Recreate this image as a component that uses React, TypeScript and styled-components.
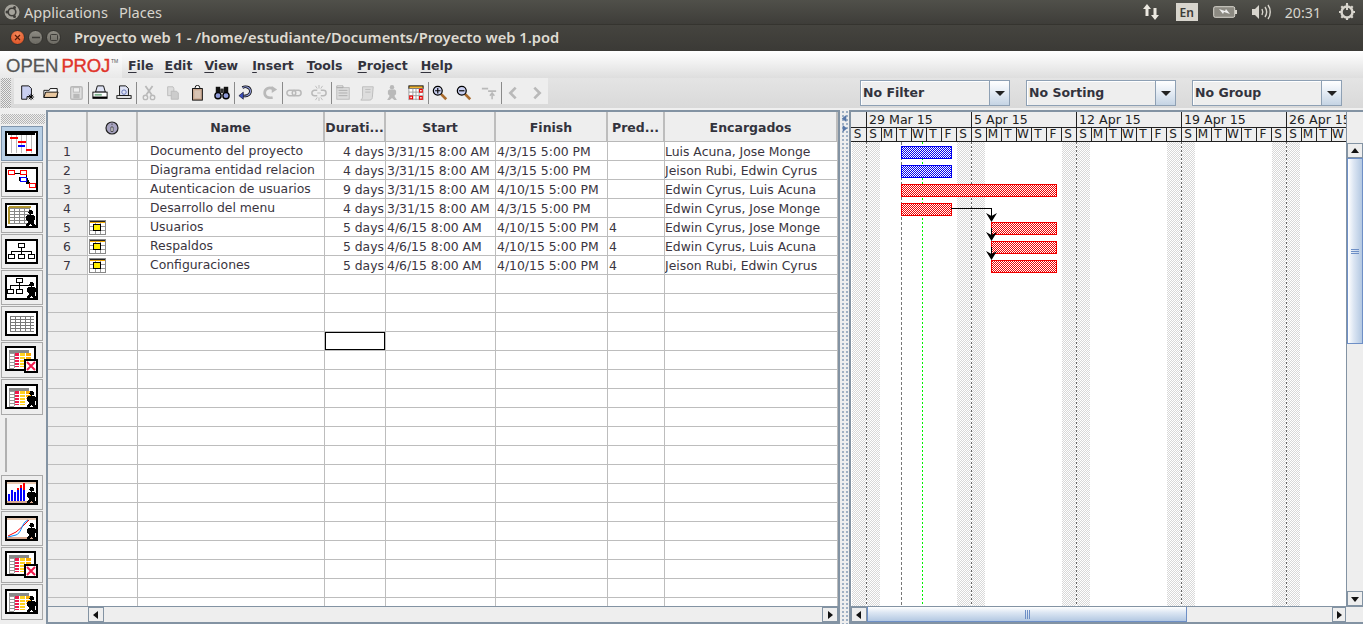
import React from 'react';
import styled, { createGlobalStyle } from 'styled-components';

const Global = createGlobalStyle`
  html, body { margin: 0; padding: 0; overflow: hidden; background: #eee; }
  * { box-sizing: border-box; }
`;

const Page = styled.div`
  width: 1363px;
  height: 624px;
  display: flex;
  flex-direction: column;
  overflow: hidden;
  font-family: "DejaVu Sans", sans-serif;
  color: #333;
`;

/* ubuntu top panel */
const TopPanel = styled.div`
  height: 25px;
  flex: none;
  background: linear-gradient(#50504a, #3e3d39);
  border-bottom: 1px solid #35342f;
  display: flex;
  align-items: center;
  padding: 0 0 0 4px;
  font-family: "Noto Sans", sans-serif;
  font-size: 14.6px;
  color: #d8d5cd;
`;
const PanelMenu = styled.span`
  margin-left: ${p => p.$gap}px;
`;
const Tray = styled.div`
  margin-left: auto;
  display: flex;
  align-items: center;
`;
const LangBox = styled.span`
  width: 22px;
  height: 18px;
  background: #d8d5cd;
  color: #3c3b37;
  font-size: 12px;
  font-weight: 600;
  text-align: center;
  line-height: 19px;
  margin: 0 15px 0 16px;
`;
const Clock = styled.span`
  margin: 0 17px 0 14px;
  font-size: 14.2px;
`;

const TitleBar = styled.div`
  height: 26px;
  flex: none;
  background: linear-gradient(#45443f, #3b3a36);
  display: flex;
  align-items: center;
  padding: 0 0 2px 10px;
  font-family: "Noto Sans", sans-serif;
  font-weight: 600;
  font-size: 14.7px;
  color: #dfdbd2;
`;
const WinBtn = styled.span`
  width: 15px;
  height: 15px;
  border-radius: 50%;
  margin-right: 3px;
  display: flex;
  align-items: center;
  justify-content: center;
  border: 1px solid #34332f;
  background: ${p => p.$close
    ? 'radial-gradient(circle at 50% 30%, #f58a5c, #d8481b)'
    : 'linear-gradient(#8d8b83, #6c6a63)'};
`;
const WinTitle = styled.span`
  margin-left: 10px;
`;

const MenuBar = styled.div`
  height: 27px;
  flex: none;
  background: linear-gradient(#ffffff, #dedede);
  display: flex;
  align-items: center;
`;
const Logo = styled.div`
  width: 122px;
  height: 27px;
  flex: none;
  padding: 5px 0 0 6px;
  background: linear-gradient(#fff, #e9e9e9);
  font-family: "Liberation Sans", sans-serif;
  font-size: 18.5px;
  line-height: 20px;
  color: #555;
  -webkit-text-stroke: 0.3px #555;
  white-space: nowrap;
`;
const LogoRed = styled.span`
  color: #e0352b;
  -webkit-text-stroke: 0.4px #e0352b;
  letter-spacing: -0.2px;
  margin-left: 3px;
`;
const LogoTm = styled.sup`
  font-size: 5px;
  line-height: 0;
  vertical-align: 9px;
  margin-left: 1px;
  -webkit-text-stroke: 0;
`;
const MenuItem = styled.span`
  font-size: 12.5px;
  font-weight: 700;
  color: #33333d;
  padding-top: 1px;
  margin-left: ${p => p.$gap}px;
  u { text-underline-offset: 2px; }
`;

const ToolBar = styled.div`
  height: 32px;
  flex: none;
  background: linear-gradient(#e4e4e4, #d9d9d9);
  border-bottom: 2px solid #f0f0f0;
  display: flex;
  align-items: flex-start;
`;
const Grip = styled.div`
  width: 10px;
  height: 30px;
  margin: 0 3px 0 1px;
  background-image: repeating-conic-gradient(#a9a9a9 0 25%, #ececec 0 50%);
  background-size: 2px 2px;
`;
const ToolGroup = styled.div`
  height: 26px;
  width: 534px;
  background: #eeeeee;
  display: flex;
  align-items: center;
  padding: 3px 0 0 1px;
`;
const ToolBtn = styled.span`
  width: 24.3px;
  height: 22px;
  flex: none;
  display: flex;
  align-items: center;
  justify-content: center;
`;
const ToolSep = styled.span`
  width: 1px;
  height: 22px;
  flex: none;
  background: #8a8a8a;
  margin-right: -1px;
`;
const Combos = styled.div`
  margin-left: auto;
  display: flex;
  gap: 16px;
  padding: 2px 21px 0 0;
`;
const Combo = styled.div`
  width: 150px;
  height: 26px;
  display: flex;
  border: 1px solid #8ea0b4;
  background: #eee;
`;
const ComboText = styled.div`
  flex: 1;
  border-right: 1px solid #8ea0b4;
  box-shadow: inset 1px 1px 0 #fff;
  padding: 1px 2px 0;
  font-size: 12.5px;
  font-weight: 700;
  line-height: 22px;
  color: #33333d;
`;
const ComboBtn = styled.div`
  width: 19px;
  display: flex;
  align-items: center;
  justify-content: center;
  background: linear-gradient(#ffffff, #e6edf5 45%, #c5d4e4);
`;
const Arrow = styled.span`
  width: 0;
  height: 0;
  border-left: 5px solid transparent;
  border-right: 5px solid transparent;
  border-top: 5px solid #222;
`;

const Main = styled.div`
  flex: 1;
  min-height: 0;
  display: flex;
  background: #eee;
`;

const SideBar = styled.div`
  width: 46px;
  flex: none;
  display: flex;
  flex-direction: column;
  gap: 1px;
  padding: 4px 0 0 1px;
`;
const SideGrip = styled.div`
  width: 44px;
  height: 10px;
  margin-bottom: 1px;
  background-image: repeating-conic-gradient(#b5b5b5 0 25%, #eeeeee 0 50%);
  background-size: 2px 2px;
`;
const SideBtn = styled.div`
  width: 42px;
  height: ${p => p.$h || 35}px;
  flex: none;
  border: 1px solid ${p => p.$active ? '#7f95ad' : '#a9a9a9'};
  background: ${p => p.$active ? '#b8cfe5' : '#eee'};
  display: flex;
  align-items: center;
  justify-content: center;
`;
const SideSep = styled.div`
  height: 54px;
  width: 2px;
  flex: none;
  margin: 2px 0 2px 4px;
  background: #b0b0b0;
`;

const TablePane = styled.div`
  width: 794px;
  flex: none;
  display: flex;
  flex-direction: column;
  border: 2px solid #8393a3;
  overflow: hidden;
`;
const COLS = '40px 50px 187px 61px 110px 112px 57px 1fr';
const HeadRow = styled.div`
  height: 30px;
  flex: none;
  display: grid;
  grid-template-columns: ${COLS};
  background: #eee;
  border-bottom: 1px solid #b8b8b8;
`;
const HeadCell = styled.div`
  border-right: 2px solid #bdbdbd;
  font-size: 12.5px;
  font-weight: 700;
  color: #33333d;
  display: flex;
  align-items: center;
  justify-content: center;
  padding-top: 2px;
  white-space: nowrap;
  overflow: hidden;
`;
const Rows = styled.div`
  flex: 1;
  min-height: 0;
  overflow: hidden;
`;
const Row = styled.div`
  height: 19px;
  display: grid;
  grid-template-columns: ${COLS};
  background: #fff;
  border-bottom: 1px solid #bdbdbd;
`;
const Cell = styled.div`
  border-right: 1px solid #bdbdbd;
  font-size: 12.4px;
  line-height: 20px;
  padding: 0 1px;
  color: #3a3540;
  white-space: nowrap;
  overflow: hidden;
  text-align: ${p => p.$align || 'left'};
  position: relative;
`;
const NumCell = styled(Cell)`
  background: #eee;
  padding-left: 15px;
`;
const NameCell = styled(Cell)`
  padding-left: 12px;
  line-height: 18px;
`;
const PeopleCell = styled(Cell)`
  padding-left: 0;
`;
const SelCell = styled.div`
  position: absolute;
  inset: 0 0 0 0;
  border: 1px solid #000;
`;
const IconSlot = styled.div`
  margin: 2px 0 0 0;
  line-height: 0;
`;
const TableFoot = styled.div`
  height: 16px;
  flex: none;
  display: flex;
  background: #eee;
  border-top: 1px solid #8393a3;
`;
const FootSpacer = styled.div`
  width: 40px;
  flex: none;
`;

const Divider = styled.div`
  width: 9px;
  flex: none;
  padding-top: 4px;
  display: flex;
  flex-direction: column;
  align-items: center;
  gap: 1px;
  background-image: radial-gradient(#9fb0c4 0.8px, transparent 1px);
  background-size: 4px 4px;
  background-position: 1px 16px;
  background-repeat: repeat;
`;
const GanttPane = styled.div`
  flex: 1;
  min-width: 0;
  display: flex;
  flex-direction: column;
  border-top: 2px solid #8393a3;
  border-left: 2px solid #8393a3;
  border-bottom: 2px solid #8393a3;
`;
const GanttUpper = styled.div`
  flex: 1;
  min-height: 0;
  display: flex;
`;
const GanttMain = styled.div`
  width: 495px;
  flex: none;
  display: flex;
  flex-direction: column;
  overflow: hidden;
`;
const WeekRow = styled.div`
  height: 16px;
  flex: none;
  display: flex;
  padding-left: 15px;
  background: #eee;
  border-bottom: 1px solid #222;
`;
const WeekCell = styled.div`
  width: 105px;
  flex: none;
  border-left: 1px solid #222;
  padding-left: 2px;
  font-size: 12.6px;
  line-height: 15px;
  color: #222;
  white-space: nowrap;
`;
const DayRow = styled.div`
  height: 14px;
  flex: none;
  display: flex;
  background: #eee;
  border-bottom: 1px solid #222;
`;
const DayCell = styled.div`
  width: 15px;
  flex: none;
  border-left: ${p => p.$first ? 0 : 1}px solid #222;
  padding-right: 2px;
  font-size: 12px;
  line-height: 13px;
  text-align: center;
  color: #222;
  overflow: hidden;
`;
const GanttBody = styled.svg`
  display: block;
  flex: 1;
  width: 495px;
  min-height: 0;
  background: #fff;
`;

const VScroll = styled.div`
  flex: 1;
  display: flex;
  flex-direction: column;
  background: #eee;
  border-left: 1px solid #8393a3;
  padding-top: 31px;
`;
const ScrollBtn = styled.div`
  flex: none;
  width: ${p => p.$w || 16}px;
  height: ${p => p.$h || 15}px;
  display: flex;
  align-items: center;
  justify-content: center;
  background: #eee;
  border: 1px solid #8393a3;
`;
const VThumb = styled.div`
  height: 186px;
  flex: none;
  display: flex;
  align-items: center;
  justify-content: center;
  border: 1px solid #6e8fc6;
  background: linear-gradient(90deg, #fff, #dce6f3 40%, #b3c8e2);
`;
const GripV = styled.span`
  width: 8px;
  height: 5px;
  border-top: 1px solid #6e8fc6;
  border-bottom: 1px solid #6e8fc6;
  position: relative;
  &::after {
    content: '';
    position: absolute;
    left: 0;
    right: 0;
    top: 1px;
    height: 1px;
    background: #6e8fc6;
  }
`;
const VTrack = styled.div`
  flex: 1;
`;
const HScroll = styled.div`
  height: 16px;
  flex: none;
  display: flex;
  background: #eee;
  border-top: 1px solid #8393a3;
`;
const HThumb = styled.div`
  width: 320px;
  flex: none;
  display: flex;
  align-items: center;
  justify-content: center;
  border: 1px solid #6e8fc6;
  border-top: 0;
  background: linear-gradient(#fff, #dce6f3 40%, #b3c8e2);
`;
const GripH = styled.span`
  width: 5px;
  height: 9px;
  border-left: 1px solid #6e8fc6;
  border-right: 1px solid #6e8fc6;
  position: relative;
  &::after {
    content: '';
    position: absolute;
    top: 0;
    bottom: 0;
    left: 1px;
    width: 1px;
    background: #6e8fc6;
  }
`;
const HTrack = styled.div`
  flex: 1;
`;
const Corner = styled.div`
  width: 17px;
  flex: none;
`;

const Tri = ({ dir, fill = '#111', size = 10 }: { dir: string; fill?: string; size?: number }) => {
  const pts: Record<string, string> = {
    l: '7,1 2,5 7,9',
    r: '3,1 8,5 3,9',
    u: '1,7 5,2 9,7',
    d: '1,3 5,8 9,3',
  };
  return (
    <svg width={size} height={size} viewBox="0 0 10 10">
      <polygon points={pts[dir]} fill={fill} />
    </svg>
  );
};

/* ----- toolbar icons, drawn on 18x18 ----- */
const S = ({ children }: { children: React.ReactNode }) => (
  <svg width="16" height="16" viewBox="0 0 18 18" fill="none">{children}</svg>
);
const G = '#b9b9b9';
const Person = ({ x = 0, y = 0, fill = '#000', s = 1 }: any) => (
  <g transform={`translate(${x} ${y}) scale(${s})`} fill={fill}>
    <circle cx="6" cy="2.5" r="2.5" />
    <path d="M3 5h6l1.600 1.500v4L9 11.500V13l2.500 4H8.500L6 14.500 3.500 17H.5L3 13v-1.500L1.400 10.500v-4z" />
  </g>
);
const toolIcons: Record<string, React.ReactNode> = {
  newdoc: <S><path d="M3 1h8l3 3v9H9v3H3z" fill="#c9cff0" stroke="#000" /><path d="M11 11l5 5M16 11l-5 5M13.500 10v7M10 13.500h7" stroke="#000" /></S>,
  open: <S><path d="M1 6h6l1-2h8v10H1z" fill="#fff" stroke="#000" /><path d="M3 8h14l-2 6H1z" fill="#e9c8a0" stroke="#000" /></S>,
  save: <S><rect x="3" y="2" width="13" height="14" rx="1.500" fill="#ddd" stroke={G} strokeWidth="1.500" /><rect x="6" y="3" width="7" height="5" fill="#eee" stroke={G} /><rect x="6" y="10" width="7" height="5" fill={G} /></S>,
  print: <S><path d="M6 1h7l2 7H4z" fill="#dfe3f5" stroke="#000" /><rect x="1" y="8" width="16" height="7" fill="#fff" stroke="#000" /><rect x="3" y="10" width="8" height="2" fill="#7ab08a" /><rect x="1" y="13" width="16" height="2" fill="#000" /></S>,
  preview: <S><path d="M4 1h7l3 3v8H4z" fill="#dfe3f5" stroke="#000" /><circle cx="9" cy="8" r="2.500" stroke="#5a6ab0" /><rect x="1" y="12" width="16" height="3" fill="#fff" stroke="#000" /></S>,
  cut: <S><path d="M5 1l7 10M13 1L6 11" stroke={G} strokeWidth="2" /><circle cx="5" cy="14" r="2.500" stroke={G} strokeWidth="1.500" /><circle cx="13" cy="14" r="2.500" stroke={G} strokeWidth="1.500" /></S>,
  copy: <S><path d="M3 2h6l1 2v8H3z" fill="#ddd" stroke={G} /><path d="M7 7h6l2 2v7H7z" fill="#ccc" stroke={G} /></S>,
  paste: <S><rect x="4" y="4" width="11" height="13" fill="#c9a890" stroke="#000" /><rect x="6" y="6" width="7" height="9" fill="#d8c4b4" /><path d="M7 4V2.500a2.500 2 0 015 0V4z" fill="#fff" stroke="#000" /></S>,
  find: <S><rect x="2" y="2" width="5" height="7" fill="#111" /><rect x="11" y="2" width="5" height="7" fill="#111" /><rect x="7" y="4" width="4" height="5" fill="#333" /><circle cx="4.500" cy="12" r="3.500" fill="#8f9bd8" stroke="#000" strokeWidth="1.500" /><circle cx="13.500" cy="12" r="3.500" fill="#8f9bd8" stroke="#000" strokeWidth="1.500" /></S>,
  undo: <S><path d="M5 3c3-2 9-1 9 4s-6 6-10 5" stroke="#000" strokeWidth="3" /><path d="M5 3c3-2 9-1 9 4s-6 6-10 5" stroke="#8f9bd8" strokeWidth="1.300" /><path d="M6 8l-5 4 5 4z" fill="#3c4fc0" stroke="#000" strokeWidth=".6" /></S>,
  redo: <S><path d="M12 4c-4-2-9 0-9 5s5 6 9 5" stroke={G} strokeWidth="3" /><path d="M11 1l6 4-6 4z" fill={G} /></S>,
  link: <S><rect x="1" y="6" width="10" height="6" rx="3" stroke={G} strokeWidth="1.700" /><rect x="7" y="6" width="10" height="6" rx="3" stroke={G} strokeWidth="1.700" /></S>,
  unlink: <S><path d="M7 6H4a3 3 0 000 6h3M11 6h3a3 3 0 010 6h-3" stroke={G} strokeWidth="1.700" /><path d="M5 1l2 3M9 0v4M13 1l-2 3M5 17l2-3M9 18v-4M13 17l-2-3M7 9h4" stroke={G} /></S>,
  tasks: <S><rect x="2" y="3" width="14" height="13" fill="#ddd" stroke={G} /><path d="M2 1h7v2H2zM4 6h10M4 9h10M4 12h10" stroke="#aaa" /></S>,
  notes: <S><path d="M4 2h12l-1 12c0 2-2 3-3 3H2c1-1 2-2 2-4z" fill="#ddd" stroke={G} /><path d="M7 5h6M7 8h6" stroke={G} /></S>,
  person: <S><Person x={3} y={0} fill={G} /></S>,
  calendar: <S><rect x="1" y="1" width="16" height="3" fill="#f2b632" stroke="#000" /><rect x="1" y="4" width="16" height="13" fill="#fff" /><path d="M1 8h16M1 12h16M1 16h16M5.500 4v13M9 4v13M12.500 4v13M1 4v13M17 4v13" stroke="#999" /><rect x="2" y="12.500" width="3" height="3" stroke="#e00" strokeWidth="1.300" /><rect x="13" y="5" width="3" height="3" stroke="#e00" strokeWidth="1.300" /><rect x="13" y="13" width="3" height="3" stroke="#e00" strokeWidth="1.300" /></S>,
  zoomin: <S><path d="M10 10l6 6" stroke="#a86a2c" strokeWidth="3" /><circle cx="6.500" cy="6.500" r="5" fill="#c9cff0" stroke="#000" strokeWidth="1.400" /><path d="M6.500 3.500v6M3.500 6.500h6" stroke="#000" strokeWidth="1.300" /></S>,
  zoomout: <S><path d="M10 10l6 6" stroke="#a86a2c" strokeWidth="3" /><circle cx="6.500" cy="6.500" r="5" fill="#c9cff0" stroke="#000" strokeWidth="1.400" /><path d="M3.500 6.500h6" stroke="#000" strokeWidth="1.300" /></S>,
  scrolltask: <S><path d="M1 3h7v2H1zM8 6h9v2H8z" fill={G} /><path d="M12.500 16v-6M10 12l2.500-3 2.500 3" stroke={G} strokeWidth="1.700" /></S>,
  prev: <S><path d="M12 3L6 9l6 6" stroke={G} strokeWidth="3" /></S>,
  next: <S><path d="M6 3l6 6-6 6" stroke={G} strokeWidth="3" /></S>,
};

const tools: (string | null)[] = [
  'newdoc', 'open', 'save', null, 'print', 'preview', null, 'cut', 'copy', 'paste', 'find', null,
  'undo', 'redo', null, 'link', 'unlink', null, 'tasks', 'notes', 'person', 'calendar', null,
  'zoomin', 'zoomout', 'scrolltask', null, 'prev', 'next',
];

/* ----- view sidebar icons ----- */
const Frame = ({ children }: { children: React.ReactNode }) => (
  <svg width="34" height="26" viewBox="0 0 34 26" shapeRendering="crispEdges">
    <rect x="1" y="1" width="31" height="23" fill="#fff" stroke="#000" strokeWidth="1.500" />
    {children}
  </svg>
);
const GridLines = ({ x, y, w, h, c = '#888' }: any) => {
  const lines = [];
  for (let i = 0; i <= h; i += 3) lines.push(<path key={'h' + i} d={`M${x} ${y + i}h${w}`} stroke={c} />);
  for (let i = 0; i <= w; i += 5) lines.push(<path key={'v' + i} d={`M${x + i} ${y}v${h}`} stroke={c} />);
  return <>{lines}</>;
};
const StatBars = () => (
  <>
    <rect x="4" y="4" width="20" height="3" fill="#888" />
    <GridLines x={4} y={7} w={5} h={15} c="#999" />
    <rect x="10" y="7" width="4" height="14" fill="#f0184c" />
    <path d="M10 10h4M10 13h4M10 16h4M10 19h4" stroke="#fff" />
    <rect x="15" y="7" width="5" height="14" fill="#ffd21e" />
    <path d="M15 10h5M15 13h5M15 16h5M15 19h5" stroke="#fff" />
    <rect x="21" y="7" width="5" height="8" fill="#ffae00" />
    <path d="M21 10h5M21 13h5" stroke="#fff" />
  </>
);
const TaskUsage = () => (
  <svg width="34" height="28" viewBox="0 0 34 28" shapeRendering="crispEdges">
    <rect x="1" y="1" width="29" height="23" fill="#fff" stroke="#000" strokeWidth="1.500" />
    <StatBars />
    <rect x="20" y="14" width="12" height="12" fill="#fff" stroke="#000" strokeWidth="1.500" />
    <path d="M22 16l8 8M30 16l-8 8" stroke="#f0184c" strokeWidth="2" shapeRendering="auto" />
  </svg>
);
const sideIcons: React.ReactNode[] = [
  <Frame key="gantt">
    <path d="M3 3h27" stroke="#000" strokeWidth="1.500" />
    <path d="M6 4v18M11 4v18M16 4v18M21 4v18M26 4v18" stroke="#bbb" />
    <rect x="5" y="6" width="8" height="2" fill="#f00" />
    <rect x="13" y="10" width="8" height="2" fill="#f00" />
    <rect x="13" y="14" width="7" height="2" fill="#00f" />
    <rect x="21" y="18" width="6" height="2" fill="#f00" />
  </Frame>,
  <Frame key="network">
    <path d="M9 6h9M21 8v8h4M14 10v4" stroke="#000" />
    <rect x="3" y="3" width="6" height="4" fill="#fff" stroke="#f00" />
    <rect x="15" y="3" width="6" height="4" fill="#fff" stroke="#f00" />
    <rect x="15" y="10" width="6" height="4" fill="#fff" stroke="#00f" />
    <rect x="24" y="16" width="6" height="4" fill="#fff" stroke="#f00" />
  </Frame>,
  <Frame key="resusage">
    <GridLines x={4} y={5} w={20} h={15} />
    <path d="M4 4h22M4 4v17" stroke="#b0952f" strokeWidth="1.500" />
    <Person x={20} y={7} s={0.95} />
  </Frame>,
  <Frame key="tree">
    <path d="M16 8v4M6 12h20M6 12v3M16 12v3M26 12v3" stroke="#000" />
    <rect x="13" y="4" width="6" height="4" fill="#fff" stroke="#000" />
    <rect x="3" y="15" width="6" height="4" fill="#fff" stroke="#000" />
    <rect x="13" y="15" width="6" height="4" fill="#fff" stroke="#000" />
    <rect x="23" y="15" width="6" height="4" fill="#fff" stroke="#000" />
  </Frame>,
  <Frame key="restree">
    <path d="M14 7v3M5 10h20M5 10v4M14 10v4" stroke="#000" />
    <rect x="11" y="3" width="6" height="4" fill="#fff" stroke="#000" />
    <rect x="2" y="14" width="6" height="4" fill="#fff" stroke="#000" />
    <rect x="11" y="14" width="6" height="4" fill="#fff" stroke="#000" />
    <Person x={21} y={7} s={0.95} />
  </Frame>,
  <Frame key="table">
    <GridLines x={5} y={5} w={24} h={15} c="#777" />
  </Frame>,
  <TaskUsage key="taskusage" />,
  <Frame key="resstat">
    <StatBars />
    <Person x={21} y={7} s={0.95} />
  </Frame>,
];
const bottomIcons: React.ReactNode[] = [
  <Frame key="hist">
    <path d="M2 3h29" stroke="#e8c8b0" strokeWidth="1.500" />
    <path d="M2 22h29" stroke="#d8a890" strokeWidth="1.500" />
    <rect x="3" y="14" width="2" height="7" fill="#00f" />
    <rect x="6" y="10" width="2" height="11" fill="#00f" />
    <rect x="9" y="12" width="2" height="9" fill="#00f" />
    <rect x="12" y="9" width="2" height="12" fill="#00f" />
    <rect x="15" y="8" width="2" height="13" fill="#00f" />
    <rect x="18" y="10" width="2" height="11" fill="#00f" />
    <rect x="12" y="8" width="2" height="2" fill="#f00" />
    <rect x="15" y="5" width="2" height="3" fill="#f00" />
    <rect x="18" y="3" width="2" height="7" fill="#f00" />
    <Person x={21} y={7} s={0.95} />
  </Frame>,
  <Frame key="curve">
    <path d="M2 3h29" stroke="#e8c8b0" strokeWidth="1.500" />
    <path d="M2 22h29" stroke="#d8a890" strokeWidth="1.500" />
    <path d="M3 20l8-4 7-6 6-6" fill="none" stroke="#f00" shapeRendering="auto" />
    <path d="M3 21l8-2c5-2 5-8 9-13l3-2" fill="none" stroke="#08f" shapeRendering="auto" />
    <Person x={21} y={7} s={0.95} />
  </Frame>,
  <TaskUsage key="taskusage2" />,
  <Frame key="resstat2">
    <StatBars />
    <Person x={21} y={7} s={0.95} />
  </Frame>,
];

const IndicatorIcon = () => (
  <svg width="16" height="16" viewBox="0 0 16 16">
    <circle cx="8" cy="8" r="6" fill="#a7a3c0" stroke="#222" strokeWidth="1.200" />
    <path d="M8 3.500v1.500M7 7h2v4.500H7z" fill="#fff" stroke="#333" strokeWidth=".8" />
  </svg>
);
const SubprojIcon = () => (
  <svg width="17" height="15" viewBox="0 0 17 15" shapeRendering="crispEdges">
    <rect x="0.500" y="0.500" width="16" height="14" fill="#fff" stroke="#888" />
    <path d="M1 1.500h15" stroke="#222" />
    <path d="M1 2.500h15" stroke="#f2a900" />
    <path d="M6 3v11M11 3v11M1 6.500h15M1 10.500h15" stroke="#999" />
    <rect x="4.500" y="4.500" width="7" height="6" fill="#ffee00" stroke="#000" />
  </svg>
);

const rowsData = [
  ['1', '', 'Documento del proyecto', '4 days', '3/31/15 8:00 AM', '4/3/15 5:00 PM', '', 'Luis Acuna, Jose Monge'],
  ['2', '', 'Diagrama entidad relacion', '4 days', '3/31/15 8:00 AM', '4/3/15 5:00 PM', '', 'Jeison Rubi, Edwin Cyrus'],
  ['3', '', 'Autenticacion de usuarios', '9 days', '3/31/15 8:00 AM', '4/10/15 5:00 PM', '', 'Edwin Cyrus, Luis Acuna'],
  ['4', '', 'Desarrollo del menu', '4 days', '3/31/15 8:00 AM', '4/3/15 5:00 PM', '', 'Edwin Cyrus, Jose Monge'],
  ['5', 'x', 'Usuarios', '5 days', '4/6/15 8:00 AM', '4/10/15 5:00 PM', '4', 'Edwin Cyrus, Jose Monge'],
  ['6', 'x', 'Respaldos', '5 days', '4/6/15 8:00 AM', '4/10/15 5:00 PM', '4', 'Edwin Cyrus, Luis Acuna'],
  ['7', 'x', 'Configuraciones', '5 days', '4/6/15 8:00 AM', '4/10/15 5:00 PM', '4', 'Jeison Rubi, Edwin Cyrus'],
];
const blanks = Array.from({ length: 18 }, (_, i) => i);

const weeks = ['29 Mar 15', '5 Apr 15', '12 Apr 15', '19 Apr 15', '26 Apr 15'];
const dayNames = 'SSMTWTF'.split('');
const days = Array.from({ length: 33 }, (_, i) => dayNames[i % 7]);

// gantt body coords: x = page x - 851, y = page y - 142
const bars = [
  { x: 50, y: 4, w: 50, c: 'blue' },
  { x: 50, y: 23, w: 50, c: 'blue' },
  { x: 50, y: 42, w: 155, c: 'red' },
  { x: 50, y: 61, w: 50, c: 'red' },
  { x: 140, y: 80, w: 65, c: 'red' },
  { x: 140, y: 99, w: 65, c: 'red' },
  { x: 140, y: 118, w: 65, c: 'red' },
];
const weekendStarts = [0, 105, 210, 315, 420];
const arrowTips = [80, 99, 118];

function Gantt() {
  return (
    <GanttBody shapeRendering="crispEdges">
      <defs>
        <pattern id="wk" width="2" height="2" patternUnits="userSpaceOnUse">
          <rect width="2" height="2" fill="#fff" />
          <rect width="1" height="1" fill="#d8d8d8" />
          <rect x="1" y="1" width="1" height="1" fill="#d8d8d8" />
        </pattern>
        <pattern id="pblue" width="2" height="2" patternUnits="userSpaceOnUse">
          <rect width="2" height="2" fill="#fff" />
          <rect width="1" height="1" fill="#0000f0" />
          <rect x="1" y="1" width="1" height="1" fill="#0000f0" />
        </pattern>
        <pattern id="pred" width="2" height="2" patternUnits="userSpaceOnUse">
          <rect width="2" height="2" fill="#fff" />
          <rect width="1" height="1" fill="#f00000" />
          <rect x="1" y="1" width="1" height="1" fill="#f00000" />
        </pattern>
      </defs>
      {weekendStarts.map(x => (
        <g key={x}>
          <rect x={x + 1} y={0} width={14} height={465} fill="url(#wk)" />
          <rect x={x + 16} y={0} width={13} height={465} fill="url(#wk)" />
          <path d={`M${x + 15.5} 0V465`} stroke="#666" strokeDasharray="2 2" />
        </g>
      ))}
      <path d="M50.500 0V465" stroke="#777" strokeDasharray="3 2" />
      <path d="M71.500 0V465" stroke="#00f000" strokeDasharray="2 2" />
      {bars.map((b, i) => (
        <rect
          key={i}
          x={b.x + 0.5}
          y={b.y + 0.5}
          width={b.w}
          height={12}
          fill={b.c === 'blue' ? 'url(#pblue)' : 'url(#pred)'}
          stroke={b.c === 'blue' ? '#0000f0' : '#f00000'}
        />
      ))}
      <path d="M100 66.500H140.500V76" stroke="#000" fill="none" />
      <path d="M140.500 86V96M140.500 105V115" stroke="#000" />
      {arrowTips.map(t => (
        <path key={t} d={`M135 ${t - 9}l5.500 9 5.500-9-5.500 3z`} fill="#000" shapeRendering="auto" />
      ))}
    </GanttBody>
  );
}

const menus: [string, string, number][] = [
  ['F', 'ile', 6], ['E', 'dit', 11], ['V', 'iew', 12], ['I', 'nsert', 14],
  ['T', 'ools', 13], ['P', 'roject', 15], ['H', 'elp', 13],
];

export default function App() {
  return (
    <Page>
      <Global />
      <TopPanel>
        <svg width="16" height="16" viewBox="0 0 16 16">
          <circle cx="8" cy="8" r="7.500" fill="#a5a39b" />
          <circle cx="8" cy="8" r="3.800" fill="none" stroke="#3f3e3a" strokeWidth="1.600" />
          <circle cx="3" cy="8" r="1.500" fill="#3f3e3a" />
          <circle cx="10.500" cy="3.500" r="1.500" fill="#3f3e3a" />
          <circle cx="10.500" cy="12.500" r="1.500" fill="#3f3e3a" />
        </svg>
        <PanelMenu $gap={4}>Applications</PanelMenu>
        <PanelMenu $gap={11}>Places</PanelMenu>
        <Tray>
          <svg width="18" height="18" viewBox="0 0 18 18">
            <path d="M5 1l4 5H6.500v7h-3V6H1z" fill="#ebe8e0" />
            <path d="M13 17l-4-5h2.500V5h3v7H17z" fill="#ebe8e0" />
          </svg>
          <LangBox>En</LangBox>
          <svg width="25" height="14" viewBox="0 0 25 14">
            <rect x="0.700" y="1.700" width="21" height="10.600" rx="1.500" fill="#8c8a82" stroke="#d8d5cd" />
            <rect x="22" y="5" width="2" height="4" fill="#d8d5cd" />
            <path d="M6 4l6 2 1-2 4 5-6-2-1 2z" fill="#eee" />
          </svg>
          <svg width="20" height="18" viewBox="0 0 20 18" style={{ marginLeft: 13 }}>
            <path d="M1 6h3l4-4v14l-4-4H1z" fill="#d8d5cd" />
            <path d="M11 6c1 2 1 4 0 6M14 4c2 3 2 7 0 10M17 2c3 4 3 10 0 14" stroke="#d8d5cd" strokeWidth="1.400" fill="none" />
          </svg>
          <Clock>20:31</Clock>
          <svg width="18" height="18" viewBox="0 0 18 18" style={{ marginRight: 7 }}>
            <circle cx="9" cy="9" r="5.500" fill="none" stroke="#d8d5cd" strokeWidth="2.500" />
            <path d="M9 0v7" stroke="#d8d5cd" strokeWidth="2" />
            <path d="M9 1v3M9 14v3M1 9h3M14 9h3M3.300 3.300l2 2M12.700 12.700l2 2M3.300 14.700l2-2M12.700 5.300l2-2" stroke="#d8d5cd" strokeWidth="2.200" />
          </svg>
        </Tray>
      </TopPanel>

      <TitleBar>
        <WinBtn $close>
          <svg width="7" height="7" viewBox="0 0 7 7"><path d="M1 1l5 5M6 1L1 6" stroke="#5a1c08" strokeWidth="1.200" /></svg>
        </WinBtn>
        <WinBtn>
          <svg width="8" height="3" viewBox="0 0 8 3"><path d="M0 1.500h8" stroke="#3c3b37" strokeWidth="1.500" /></svg>
        </WinBtn>
        <WinBtn>
          <svg width="8" height="7" viewBox="0 0 8 7"><rect x=".5" y=".5" width="7" height="6" rx="1" fill="none" stroke="#3c3b37" /></svg>
        </WinBtn>
        <WinTitle>Proyecto web 1 - /home/estudiante/Documents/Proyecto web 1.pod</WinTitle>
      </TitleBar>

      <MenuBar>
        <Logo>OPEN<LogoRed>PROJ</LogoRed><LogoTm>TM</LogoTm></Logo>
        {menus.map(([k, rest, gap]) => (
          <MenuItem key={k} $gap={gap}><u>{k}</u>{rest}</MenuItem>
        ))}
      </MenuBar>

      <ToolBar>
        <Grip />
        <ToolGroup>
          {tools.map((t, i) =>
            t === null
              ? <ToolSep key={i} />
              : <ToolBtn key={i}>{toolIcons[t]}</ToolBtn>
          )}
        </ToolGroup>
        <Combos>
          {['No Filter', 'No Sorting', 'No Group'].map(t => (
            <Combo key={t}>
              <ComboText>{t}</ComboText>
              <ComboBtn><Arrow /></ComboBtn>
            </Combo>
          ))}
        </Combos>
      </ToolBar>

      <Main>
        <SideBar>
          <SideGrip />
          {sideIcons.map((ic, i) => (
            <SideBtn key={i} $active={i === 0} $h={i >= 6 ? 36 : 35}>{ic}</SideBtn>
          ))}
          <SideSep />
          {bottomIcons.map((ic, i) => (
            <SideBtn key={i} $h={i >= 2 ? 36 : 35}>{ic}</SideBtn>
          ))}
        </SideBar>

        <TablePane>
          <HeadRow>
            <HeadCell />
            <HeadCell><IndicatorIcon /></HeadCell>
            <HeadCell>Name</HeadCell>
            <HeadCell>Durati...</HeadCell>
            <HeadCell>Start</HeadCell>
            <HeadCell>Finish</HeadCell>
            <HeadCell>Pred...</HeadCell>
            <HeadCell>Encargados</HeadCell>
          </HeadRow>
          <Rows>
            {rowsData.map(r => (
              <Row key={r[0]}>
                <NumCell>{r[0]}</NumCell>
                <Cell>{r[1] && <IconSlot><SubprojIcon /></IconSlot>}</Cell>
                <NameCell>{r[2]}</NameCell>
                <Cell $align="right">{r[3]}</Cell>
                <Cell>{r[4]}</Cell>
                <Cell>{r[5]}</Cell>
                <Cell>{r[6]}</Cell>
                <PeopleCell>{r[7]}</PeopleCell>
              </Row>
            ))}
            {blanks.map(i => (
              <Row key={i}>
                <NumCell />
                <Cell />
                <Cell />
                <Cell>{i === 3 && <SelCell />}</Cell>
                <Cell />
                <Cell />
                <Cell />
                <Cell />
              </Row>
            ))}
          </Rows>
          <TableFoot>
            <FootSpacer />
            <ScrollBtn $w={16}><Tri dir="l" /></ScrollBtn>
            <HTrack />
            <ScrollBtn $w={16}><Tri dir="r" /></ScrollBtn>
          </TableFoot>
        </TablePane>

        <Divider>
          <Tri dir="l" fill="#5878a8" size={9} />
          <Tri dir="r" fill="#5878a8" size={9} />
        </Divider>

        <GanttPane>
          <GanttUpper>
            <GanttMain>
              <WeekRow>
                {weeks.map(w => <WeekCell key={w}>{w}</WeekCell>)}
              </WeekRow>
              <DayRow>
                {days.map((d, i) => <DayCell key={i} $first={i === 0}>{d}</DayCell>)}
              </DayRow>
              <Gantt />
            </GanttMain>
            <VScroll>
              <ScrollBtn $w={16}><Tri dir="u" /></ScrollBtn>
              <VThumb><GripV /></VThumb>
              <VTrack />
              <ScrollBtn $w={16}><Tri dir="d" /></ScrollBtn>
            </VScroll>
          </GanttUpper>
          <HScroll>
            <ScrollBtn $w={16}><Tri dir="l" /></ScrollBtn>
            <HThumb><GripH /></HThumb>
            <HTrack />
            <ScrollBtn $w={14}><Tri dir="r" /></ScrollBtn>
            <Corner />
          </HScroll>
        </GanttPane>
      </Main>
    </Page>
  );
}
